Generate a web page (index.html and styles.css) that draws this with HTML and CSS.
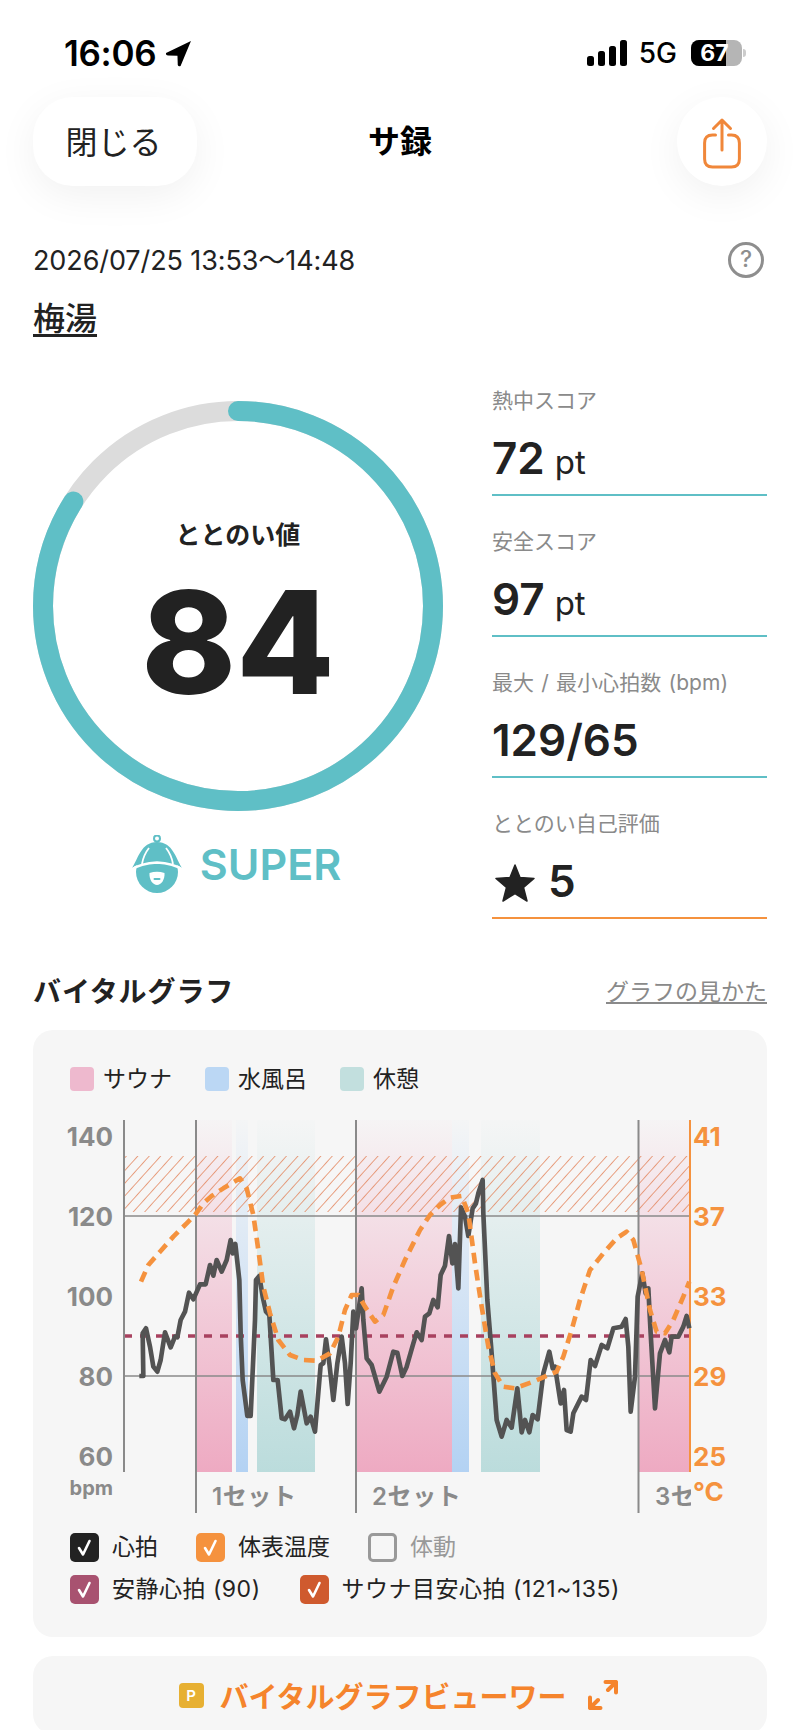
FILE: index.html
```html
<!DOCTYPE html>
<html lang="ja">
<head>
    <meta charset="utf-8">
    <title>サ録</title>
    <link rel="stylesheet" href="styles.css">
</head>
<body>
<div class="page">
    <div class="status">
        <div class="status-left">
            <span class="time">16:06</span>
            <svg class="loc" width="27" height="27" viewBox="0 0 26 26"><path d="M25 1 L1 12.5 Q0.5 14.5 3 15 L12 15.2 L12.3 24 Q13 26 15 25 Z" fill="#000"/></svg>
        </div>
        <div class="status-right">
            <svg width="40" height="26" viewBox="0 0 40 26"><rect x="0" y="16" width="7" height="10" rx="2.5"/><rect x="11" y="11" width="7" height="15" rx="2.5"/><rect x="22" y="6" width="7" height="20" rx="2.5"/><rect x="33" y="0" width="7" height="26" rx="2.5"/></svg>
            <span class="net">5G</span>
            <div class="battery"><div class="battery-fill"></div><span class="battery-num">67</span><i class="battery-nub"></i></div>
        </div>
    </div>

    <div class="nav">
        <div class="nav-left"><button class="btn-close">閉じる</button></div>
        <div class="nav-title">サ録</div>
        <div class="nav-right">
            <button class="btn-share">
                <svg width="44" height="54" viewBox="0 0 44 54" fill="none" stroke="#f0873a" stroke-width="3" stroke-linecap="round" stroke-linejoin="round"><path d="M15.500 20 H12.500 Q4.600 20 4.600 28 V44 Q4.600 52 12.500 52 H31.500 Q39.400 52 39.400 44 V28 Q39.400 20 31.500 20 H28.500"/><path d="M22 35 V5 M13.500 13.500 L22 5 L30.500 13.500"/></svg>
            </button>
        </div>
    </div>

    <div class="meta">
        <span class="date">2026/07/25 13:53～14:48</span>
        <span class="help">?</span>
    </div>
    <div class="place">梅湯</div>

    <div class="score">
        <div class="score-left">
            <div class="ring">
                <svg width="410" height="410" viewBox="0 0 410 410" fill="none">
                    <circle cx="205" cy="205" r="195" stroke="#dcdcdc" stroke-width="20"/>
                    <circle class="ring-bar" cx="205" cy="205" r="195" stroke="#5fbfc6" stroke-width="20" stroke-linecap="round" pathLength="100" stroke-dasharray="84 100"/>
                </svg>
                <div class="ring-inner">
                    <div class="ring-label">ととのい値</div>
                    <div class="ring-value">84</div>
                </div>
            </div>
            <div class="rank">
                <svg width="52" height="60" viewBox="7 6 52 60">
                    <circle cx="33" cy="9.5" r="3" fill="none" stroke="#5fbfc6" stroke-width="2"/>
                    <circle cx="33" cy="43" r="21" fill="#5fbfc6"/>
                    <path d="M8 39 C14 30 17 13 33 13 C49 13 52 30 58 39 C50 34 42 32 33 32 C24 32 16 34 8 39 Z" fill="#5fbfc6"/>
                    <path d="M7 41 C14 36 22 34 33 33.5 C44 34 52 36 59 41" fill="none" stroke="#fff" stroke-width="2.4"/>
                    <path d="M25 19 C21 24 19 29 18 35 M42 19 C46 24 48 29 49 35" fill="none" stroke="#fff" stroke-width="1.8"/>
                    <path d="M25.5 44 Q33 41.5 40.5 44 C41 51 37 56 33 56 C29 56 25 51 25.5 44 Z" fill="#fff"/>
                    <rect x="29.5" y="49" width="7" height="2" rx="1" fill="#5fbfc6"/>
                </svg>
                <span class="rank-name">SUPER</span>
            </div>
        </div>
        <div class="stats">
            <div class="stat">
                <div class="stat-label">熱中スコア</div>
                <div class="stat-value">72 <small>pt</small></div>
            </div>
            <div class="stat">
                <div class="stat-label">安全スコア</div>
                <div class="stat-value">97 <small>pt</small></div>
            </div>
            <div class="stat">
                <div class="stat-label stat-label-wide">最大 / 最小心拍数 (bpm)</div>
                <div class="stat-value">129/65</div>
            </div>
            <div class="stat stat-self">
                <div class="stat-label">ととのい自己評価</div>
                <div class="stat-value">
                    <svg class="star" width="42" height="38" viewBox="0 0 42 38"><path d="M21 1 L26 13.5 L40 14.5 L29.5 23.5 L33 37 L21 29.5 L9 37 L12.5 23.5 L2 14.5 L16 13.5 Z" fill="#222" stroke="#222" stroke-width="1.5" stroke-linejoin="round"/></svg>
                    5
                </div>
            </div>
        </div>
    </div>

    <div class="graph-head">
        <h2>バイタルグラフ</h2>
        <a class="graph-link">グラフの見かた</a>
    </div>

    <div class="card graph-card">
        <div class="legend">
            <span class="legend-item"><i class="swatch swatch-sauna"></i>サウナ</span>
            <span class="legend-item"><i class="swatch swatch-water"></i>水風呂</span>
            <span class="legend-item"><i class="swatch swatch-rest"></i>休憩</span>
        </div>

        <!-- viewBox uses page coordinates, traces are in 3x units -->
        <svg class="chart" width="733" height="405" viewBox="33 1110 733 405">
            <defs>
                <linearGradient id="gradPink" x1="0" y1="0" x2="0" y2="1"><stop offset="0" stop-color="#eeaac2" stop-opacity="0.03"/><stop offset="1" stop-color="#eeaac2"/></linearGradient>
                <linearGradient id="gradBlue" x1="0" y1="0" x2="0" y2="1"><stop offset="0" stop-color="#b3d2f3" stop-opacity="0.03"/><stop offset="1" stop-color="#b3d2f3"/></linearGradient>
                <linearGradient id="gradTeal" x1="0" y1="0" x2="0" y2="1"><stop offset="0" stop-color="#bbdcdc" stop-opacity="0.03"/><stop offset="1" stop-color="#bbdcdc"/></linearGradient>
                <pattern id="hatch" width="8.500" height="8.500" patternUnits="userSpaceOnUse" patternTransform="rotate(-48)">
                    <line x1="0" y1="0" x2="8.500" y2="0" stroke="#e27f55" stroke-width="1.800" stroke-opacity="0.8"/>
                </pattern>
            </defs>

            <rect x="197" y="1120" width="35" height="352" fill="url(#gradPink)"/>
            <rect x="236" y="1120" width="12" height="352" fill="url(#gradBlue)"/>
            <rect x="257" y="1120" width="58" height="352" fill="url(#gradTeal)"/>
            <rect x="357" y="1120" width="95" height="352" fill="url(#gradPink)"/>
            <rect x="452" y="1120" width="17" height="352" fill="url(#gradBlue)"/>
            <rect x="481" y="1120" width="59" height="352" fill="url(#gradTeal)"/>
            <rect x="639" y="1120" width="51" height="352" fill="url(#gradPink)"/>

            <rect x="125" y="1156" width="564" height="56" fill="url(#hatch)"/>

            <line class="grid" x1="124" y1="1216" x2="690" y2="1216"/>
            <line class="grid" x1="124" y1="1376" x2="690" y2="1376"/>
            <line x1="124" y1="1336" x2="690" y2="1336" stroke="#a8415f" stroke-width="3.5" stroke-dasharray="8 8"/>

            <line class="axis" x1="124" y1="1120" x2="124" y2="1472"/>
            <line class="axis" x1="196" y1="1120" x2="196" y2="1513"/>
            <line class="axis" x1="356" y1="1120" x2="356" y2="1513"/>
            <line class="axis" x1="638.500" y1="1120" x2="638.500" y2="1513"/>
            <line x1="690" y1="1120" x2="690" y2="1472" stroke="#f5923e" stroke-width="2"/>

            <g transform="translate(40 1100) scale(0.33333)" fill="none" stroke-linejoin="round">
                <polyline stroke="#535353" stroke-width="14" points="298,828 310,828 308,700 318,685 330,740 340,800 352,815 362,780 375,697 392,742 405,710 412,712 422,660 435,635 447,578 460,598 480,553 497,553 510,495 520,527 530,480 545,515 560,480 572,420 578,460 586,432 598,540 602,700 608,840 622,948 632,948 645,660 648,540 658,528 668,590 678,635 688,645 700,840 713,840 725,955 735,958 750,935 762,985 772,945 782,875 800,970 812,950 825,995 842,795 850,790 858,718 868,790 880,900 892,790 905,710 915,790 923,912 932,790 940,635 948,685 965,565 970,660 980,775 995,795 1018,875 1040,830 1060,755 1072,758 1087,828 1100,800 1120,730 1130,697 1145,720 1155,650 1168,640 1180,600 1193,622 1202,525 1215,497 1227,408 1237,490 1245,432 1255,565 1263,322 1275,350 1285,408 1298,325 1308,310 1315,280 1328,240 1330,340 1342,600 1355,760 1370,960 1385,1010 1400,960 1415,983 1432,865 1445,997 1455,960 1468,997 1478,945 1493,958 1510,820 1528,755 1538,805 1545,800 1562,910 1572,870 1580,990 1592,995 1600,940 1625,890 1638,900 1652,780 1665,798 1685,735 1702,745 1720,685 1745,680 1757,657 1765,740 1772,935 1785,830 1793,590 1807,520 1817,580 1825,565 1832,700 1845,925 1860,760 1875,720 1888,757 1895,710 1915,710 1930,680 1940,648 1948,685"/>
                <polyline stroke="#f5923e" stroke-width="14" stroke-dasharray="32 20" points="303,545 325,495 360,455 400,410 440,370 465,345 490,310 515,288 550,265 600,235 620,265 640,345 655,450 670,560 690,640 715,720 750,765 790,780 830,782 870,760 895,710 915,630 935,585 955,585 975,620 1005,665 1030,645 1060,560 1095,480 1140,390 1170,345 1200,315 1230,293 1265,288 1285,340 1305,490 1325,620 1345,740 1365,820 1390,860 1425,865 1480,845 1550,815 1570,770 1595,690 1620,600 1650,510 1690,460 1730,415 1760,395 1780,420 1805,510 1830,630 1850,695 1875,700 1900,660 1930,590 1948,545"/>
            </g>

            <g class="tick">
                <text x="113" y="1146">140</text>
                <text x="113" y="1226">120</text>
                <text x="113" y="1306">100</text>
                <text x="113" y="1386">80</text>
                <text x="113" y="1466">60</text>
            </g>
            <text class="unit" x="113" y="1495">bpm</text>
            <g class="tick tick-temp">
                <text x="693" y="1146">41</text>
                <text x="693" y="1226">37</text>
                <text x="693" y="1306">33</text>
                <text x="693" y="1386">29</text>
                <text x="693" y="1466">25</text>
                <text x="693" y="1501">°C</text>
            </g>
            <g class="set">
                <text x="212" y="1505">1セット</text>
                <text x="372" y="1505">2セット</text>
                <svg x="654" y="1470" width="37" height="50" viewBox="654 1470 37 50"><text x="655" y="1505">3セ</text></svg>
            </g>
        </svg>

        <div class="checks">
            <div class="check-row">
                <span class="check"><i class="box box-heart"><svg width="29" height="29" viewBox="0 0 29 29"><path class="tick-mark" d="M9 15 L13 21.500 L19.500 8"/></svg></i>心拍</span>
                <span class="check"><i class="box box-temp"><svg width="29" height="29" viewBox="0 0 29 29"><path class="tick-mark" d="M9 15 L13 21.500 L19.500 8"/></svg></i>体表温度</span>
                <span class="check check-off"><i class="box box-empty"></i>体動</span>
            </div>
            <div class="check-row check-row-spaced">
                <span class="check"><i class="box box-rest"><svg width="29" height="29" viewBox="0 0 29 29"><path class="tick-mark" d="M9 15 L13 21.500 L19.500 8"/></svg></i>安静心拍 (90)</span>
                <span class="check"><i class="box box-sauna"><svg width="29" height="29" viewBox="0 0 29 29"><path class="tick-mark" d="M9 15 L13 21.500 L19.500 8"/></svg></i>サウナ目安心拍 (121~135)</span>
            </div>
        </div>
    </div>

    <div class="card viewer">
        <span class="badge">P</span>
        <span class="viewer-text">バイタルグラフビューワー</span>
        <svg width="30" height="30" viewBox="0 0 30 30" fill="none" stroke="#f5842c" stroke-width="4" stroke-linecap="round" stroke-linejoin="round"><path d="M17.500 2 H28 V12.500 M28 2 L20 10"/><path d="M12.500 28 H2 V17.500 M2 28 L10 20"/></svg>
    </div>
</div>
</body>
</html>
```

FILE: styles.css
```css
* {
    box-sizing: border-box;
}
html, body {
    margin: 0;
    padding: 0;
    background: #fff;
}
.page {
    width: 800px;
    height: 1730px;
    overflow: hidden;
    padding: 0 33px;
    font-family: Inter, "Noto Sans CJK JP", sans-serif;
    color: #222;
}

/* status bar */
.status {
    height: 97px;
    padding: 9px 25px 0 31px;
    display: flex;
    align-items: center;
    justify-content: space-between;
}
.status-left, .status-right {
    display: flex;
    align-items: center;
}
.time {
    font-size: 35px;
    font-weight: 600;
    color: #000;
    letter-spacing: -0.3px;
}
.loc {
    margin-left: 9px;
}
.net {
    font-size: 28px;
    font-weight: 500;
    color: #000;
    margin: 0 14px 0 12px;
}
.battery {
    position: relative;
    width: 51px;
    height: 26px;
    border-radius: 8px;
    background: #b5b5b5;
}
.battery-fill {
    width: 35px;
    height: 26px;
    border-radius: 8px 0 0 8px;
    background: #000;
}
.battery-num {
    position: absolute;
    left: 0;
    top: 0;
    width: 47px;
    text-align: center;
    font-size: 23px;
    line-height: 26px;
    font-weight: 700;
    color: #fff;
}
.battery-nub {
    position: absolute;
    right: -4px;
    top: 9px;
    width: 3px;
    height: 8px;
    border-radius: 0 3px 3px 0;
    background: #ccc;
}

/* nav */
.nav {
    height: 89px;
    display: grid;
    grid-template-columns: 1fr auto 1fr;
    align-items: center;
}
.nav-right {
    display: flex;
    justify-content: flex-end;
}
.btn-close, .btn-share {
    border: none;
    height: 89px;
    background: #fff;
    box-shadow: 0 10px 40px rgba(0, 0, 0, 0.06);
    font-family: inherit;
    color: #222;
}
.btn-close {
    width: 164px;
    border-radius: 40px;
    font-size: 32px;
    padding: 0 3px 4px 0;
}
.btn-share {
    width: 90px;
    border-radius: 50%;
    padding: 0;
    display: flex;
    align-items: center;
    justify-content: center;
}
.nav-title {
    font-size: 32px;
    font-weight: 700;
    color: #000;
    padding-bottom: 5px;
}

.meta {
    margin-top: 57px;
    height: 34px;
    display: flex;
    align-items: center;
    justify-content: space-between;
}
.date {
    font-size: 27px;
    color: #222;
    margin-bottom: 4px;
    letter-spacing: -0.1px;
}
.help {
    width: 36px;
    height: 36px;
    margin-right: 3px;
    border: 3px solid #8e8e8e;
    border-radius: 50%;
    color: #8e8e8e;
    font-size: 23px;
    font-weight: 500;
    line-height: 29px;
    text-align: center;
}
.place {
    margin-top: 22px;
    height: 40px;
    line-height: 40px;
    font-size: 32px;
    font-weight: 500;
    text-decoration: underline;
    text-underline-offset: 4px;
    width: 66px;
}

/* score */
.score {
    margin-top: 16px;
    display: flex;
    justify-content: space-between;
}
.score-left {
    width: 410px;
    padding-top: 46px;
}
.ring {
    position: relative;
    width: 410px;
    height: 410px;
}
.ring-bar {
    transform: rotate(-90deg);
    transform-origin: 205px 205px;
}
.ring-inner {
    position: absolute;
    inset: 0;
    padding-top: 117px;
    text-align: center;
}
.ring-label {
    font-size: 25px;
    line-height: 34px;
    font-weight: 600;
}
.ring-value {
    margin-top: 5px;
    font-size: 143px;
    line-height: 170px;
    font-weight: 800;
}
.rank {
    margin-top: 26px;
    height: 56px;
    display: flex;
    align-items: center;
    justify-content: center;
    gap: 17px;
    padding-right: 4px;
}
.rank-name {
    font-size: 43px;
    font-weight: 600;
    color: #5fbfc6;
    margin-top: -2px;
}
.stats {
    width: 275px;
}
.stat {
    height: 141px;
    padding-top: 32px;
    border-bottom: 2px solid #5fbfc6;
}
.stat-self {
    border-bottom-color: #f5923e;
}
.stat-label {
    font-size: 21px;
    line-height: 28px;
    color: #8a8a8a;
    white-space: nowrap;
}
.stat-label-wide {
    letter-spacing: 0.1px;
    word-spacing: 1px;
}
.stat-value {
    margin-top: 18px;
    height: 50px;
    line-height: 50px;
    font-size: 44px;
    font-weight: 600;
    display: flex;
    align-items: baseline;
    gap: 10px;
    color: #222;
}
.stat-value small {
    font-size: 33px;
    font-weight: 400;
}
.star {
    align-self: center;
    margin: 4px 2px 0 2px;
}

/* graph */
.graph-head {
    margin-top: 51px;
    height: 40px;
    display: flex;
    align-items: center;
    justify-content: space-between;
}
.graph-head h2 {
    margin: 0;
    font-size: 28px;
    font-weight: 700;
    letter-spacing: 0.9px;
}
.graph-link {
    font-size: 23px;
    color: #8a8a8a;
    text-decoration: underline;
}
.card {
    background: #f6f6f6;
    border-radius: 20px;
}
.graph-card {
    margin-top: 20px;
    height: 607px;
    padding: 37px 0 0 37px;
}
.legend {
    height: 24px;
    display: flex;
    align-items: center;
    gap: 33px;
}
.legend-item {
    display: flex;
    align-items: center;
    gap: 9px;
    font-size: 23px;
    line-height: 24px;
}
.swatch {
    width: 24px;
    height: 24px;
    border-radius: 4px;
}
.swatch-sauna {
    background: #eeb9ce;
}
.swatch-water {
    background: #bbd7f4;
}
.swatch-rest {
    background: #c2dfde;
}
.chart {
    display: block;
    margin: 19px 0 0 -37px;
}
.grid {
    stroke: #8a8a8a;
    stroke-width: 1.6;
}
.axis {
    stroke: #8a8a8a;
    stroke-width: 2;
}
.tick text {
    font-size: 26px;
    font-weight: 700;
    fill: #8a8a8a;
    text-anchor: end;
}
.tick-temp text {
    fill: #f5923e;
    text-anchor: start;
}
.unit {
    font-size: 20px;
    font-weight: 700;
    fill: #8a8a8a;
    text-anchor: end;
}
.set text {
    font-size: 24px;
    font-weight: 600;
    letter-spacing: 0.6px;
    fill: #8a8a8a;
}
.checks {
    margin-top: 18px;
    display: flex;
    flex-direction: column;
    gap: 13px;
}
.check-row {
    height: 29px;
    display: flex;
}
.check-row-spaced .check {
    letter-spacing: 0.5px;
    margin-right: 39px;
}
.check {
    display: flex;
    align-items: center;
    gap: 13px;
    font-size: 23px;
    line-height: 27px;
    margin-right: 38px;
}
.check-off {
    color: #999;
}
.box {
    display: block;
    width: 29px;
    height: 29px;
    border-radius: 5px;
}
.box svg {
    display: block;
}
.tick-mark {
    fill: none;
    stroke: #fff;
    stroke-width: 2.6;
    stroke-linecap: round;
    stroke-linejoin: round;
}
.box-heart {
    background: #222;
}
.box-temp {
    background: #f5923e;
}
.box-empty {
    border: 3px solid #999;
}
.box-rest {
    background: #a85270;
}
.box-sauna {
    background: #cf5a2e;
}

/* viewer button */
.viewer {
    margin-top: 19px;
    height: 78px;
    display: flex;
    align-items: center;
    justify-content: center;
    padding-right: 3px;
}
.badge {
    width: 25px;
    height: 25px;
    border-radius: 4px;
    background: #e7b032;
    color: #fff;
    font-size: 15px;
    font-weight: 600;
    line-height: 25px;
    text-align: center;
}
.viewer-text {
    margin: 0 22px 0 16px;
    font-size: 29px;
    font-weight: 700;
    color: #f5842c;
}
```
